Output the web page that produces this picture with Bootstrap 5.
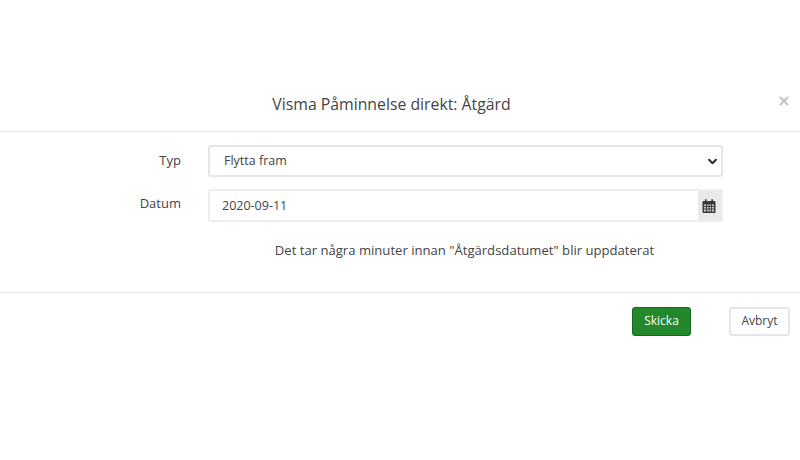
<!DOCTYPE html>
<html lang="sv">
<head>
<meta charset="utf-8">
<title>Visma Påminnelse direkt: Åtgärd</title>
<link href="https://cdn.jsdelivr.net/npm/bootstrap@5.3.0/dist/css/bootstrap.min.css" rel="stylesheet">
<style>
html, body { height: 460px; overflow: hidden; background: #fff; }
body { font-family: "Open Sans", "Liberation Sans", sans-serif; font-size: 13px; color: #333; }
.dlg-head { height: 132px; padding: 0 10px 0 0; border-bottom: 1px solid #e6e6e6; }
.dlg-title { font-size: 15.8px; font-weight: 400; color: #444; margin: 0; padding-bottom: 16px; padding-left: 5px; flex: 1; text-align: center; line-height: 22px; }
.dlg-close { background: none; border: 0; padding: 0; width: 12px; height: 12px; margin-bottom: 24px; line-height: 0; }
.dlg-body { height: 161px; padding-top: 13px; border-bottom: 1px solid #e6e6e6; }
.lbl-col { width: 181px; text-align: right; color: #444; margin: 0; }
.lbl-top { align-self: flex-start; padding-top: 5px; }
.fld-col { width: 515px; margin-left: 27px; }
.fld-sel.form-select { height: 32px; padding: 0 30px 0 14px; font-size: 12.5px; color: #444; border: 2px solid #e6e6e6; border-radius: 3px; background-image: url("data:image/svg+xml,%3csvg xmlns='http://www.w3.org/2000/svg' viewBox='0 0 16 16'%3e%3cpath fill='none' stroke='%23333' stroke-width='3' stroke-linecap='round' stroke-linejoin='round' d='M3 5.5l5 5 5-5'/%3e%3c/svg%3e"); background-size: 11px 11px; background-position: right 3px center; box-shadow: none; }
.fld-date.form-control { height: 33px; padding: 0 12px; font-size: 12.5px; color: #444; border: 2px solid #efefef; border-right: 0; border-radius: 3px 0 0 3px; }
.cal-add.input-group-text { width: 26px; height: 33px; padding: 0; justify-content: center; background: #e9e9e9; border: 2px solid #efefef; border-left: 0; border-radius: 0 3px 3px 0; }
.row-gap { margin-bottom: 12px; }
.note-line { margin: 19px 0 0 -2px; text-align: center; color: #444; font-size: 13.1px; line-height: 18px; }
.dlg-foot { padding: 14px 10px 0 0; gap: 38px; }
.btn-send.btn { width: 59px; height: 29px; padding: 0 0 2px; font-size: 12px; font-weight: 500; background: #23882b; border: 1px solid #16661e; color: #fff; border-radius: 3px; }
.btn-abort.btn { width: 61px; height: 29px; padding: 0 0 2px; font-size: 12px; background: #fff; border: 2px solid #e6e6e6; color: #444; border-radius: 3px; }
</style>
</head>
<body>
<div class="d-flex align-items-end dlg-head">
  <h5 class="dlg-title">Visma Påminnelse direkt: Åtgärd</h5>
  <button type="button" class="dlg-close" aria-label="Stäng">
    <svg width="12" height="12" viewBox="0 0 12 12"><path d="M2 2l8 8M10 2l-8 8" stroke="#c4c4c4" stroke-width="2" fill="none"/></svg>
  </button>
</div>
<div class="dlg-body">
  <div class="d-flex align-items-center row-gap">
    <label class="lbl-col">Typ</label>
    <div class="fld-col">
      <select class="form-select fld-sel"><option>Flytta fram</option></select>
    </div>
  </div>
  <div class="d-flex">
    <label class="lbl-col lbl-top">Datum</label>
    <div class="fld-col">
      <div class="input-group">
        <input type="text" class="form-control fld-date" value="2020-09-11">
        <span class="input-group-text cal-add">
          <svg width="14" height="16" viewBox="0 0 14 15"><path d="M1.5 2.5h11a1 1 0 0 1 1 1v10a1 1 0 0 1-1 1h-11a1 1 0 0 1-1-1v-10a1 1 0 0 1 1-1z" fill="#3a3a3a"/><path d="M2 6h2v1.6H2zM5 6h1.6v1.6H5zM7.5 6h1.6v1.6H7.5zM10 6h2v1.6h-2zM2 8.5h2v1.6H2zM5 8.5h1.6v1.6H5zM7.5 8.5h1.6v1.6H7.5zM10 8.5h2v1.6h-2zM2 11h2v2H2zM5 11h1.6v2H5zM7.5 11h1.6v2H7.5zM10 11h2v2h-2z" fill="#cfcfcf"/><path d="M3 .8h1.6v3H3zM9.4 .8H11v3H9.4z" fill="#3a3a3a"/></svg>
        </span>
      </div>
      <p class="note-line">Det tar några minuter innan "Åtgärdsdatumet" blir uppdaterat</p>
    </div>
  </div>
</div>
<div class="d-flex justify-content-end dlg-foot">
  <button type="button" class="btn btn-send">Skicka</button>
  <button type="button" class="btn btn-abort">Avbryt</button>
</div>
<script src="https://cdn.jsdelivr.net/npm/bootstrap@5.3.0/dist/js/bootstrap.bundle.min.js"></script>
</body>
</html>
